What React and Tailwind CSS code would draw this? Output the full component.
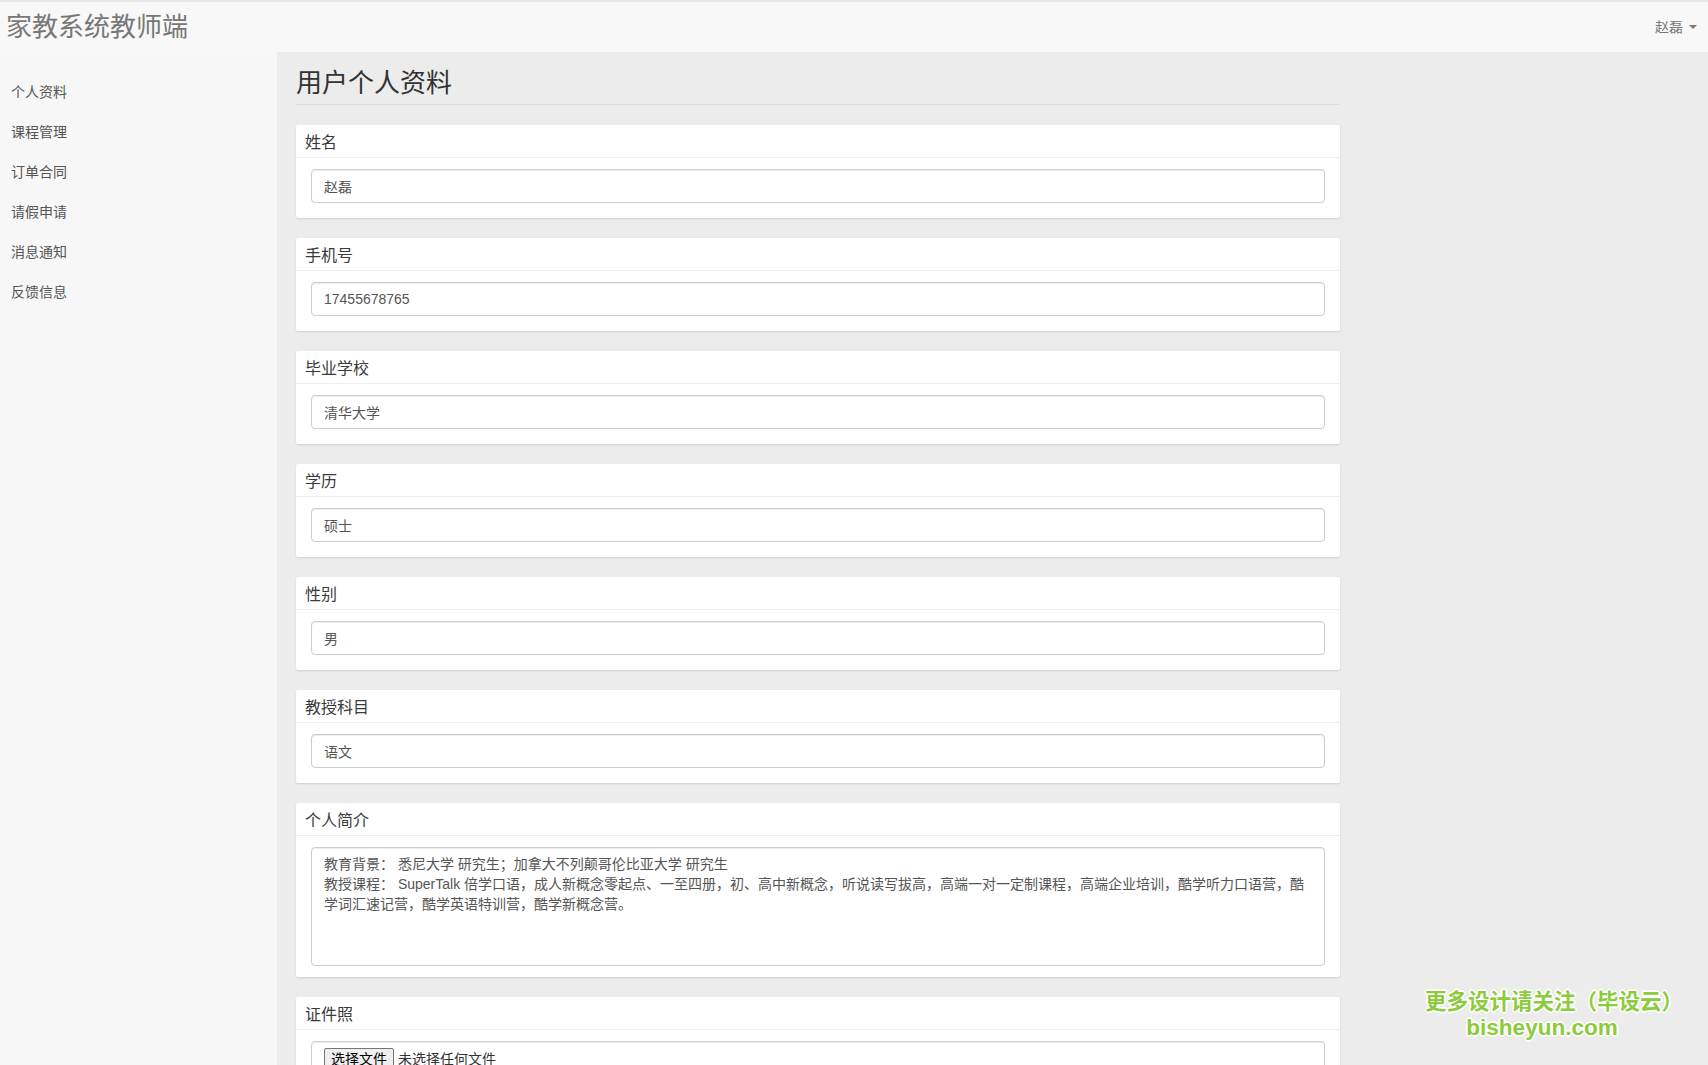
import React from 'react';

const menu = ['个人资料', '课程管理', '订单合同', '请假申请', '消息通知', '反馈信息'];

const fields = [
  { label: '姓名', value: '赵磊' },
  { label: '手机号', value: '17455678765' },
  { label: '毕业学校', value: '清华大学' },
  { label: '学历', value: '硕士' },
  { label: '性别', value: '男' },
  { label: '教授科目', value: '语文' },
];

const intro =
  '教育背景： 悉尼大学 研究生；加拿大不列颠哥伦比亚大学 研究生\n教授课程： SuperTalk 倍学口语，成人新概念零起点、一至四册，初、高中新概念，听说读写拔高，高端一对一定制课程，高端企业培训，酷学听力口语营，酷学词汇速记营，酷学英语特训营，酷学新概念营。';

const Panel = ({ title, bodyClass = 'pb-[15px]', children }) => (
  <div className="mb-[20px] rounded-[2px] bg-white shadow-[0_1px_2px_rgba(0,0,0,0.12)]">
    <div className="flex h-[33px] items-center border-b border-[#eeeeee] pl-[9px] pt-[3px] text-[16px] text-[#3a3a3a]">
      {title}
    </div>
    <div className={`px-[15px] pt-[11px] ${bodyClass}`}>{children}</div>
  </div>
);

const App = () => {
  return (
    <div className="relative min-h-screen bg-[#ececec] font-['Liberation_Sans','Noto_Sans_CJK_SC',sans-serif]">
      {/* Top navbar */}
      <header className="flex h-[52px] items-center justify-between border-t-2 border-[#e4e4e4] bg-[#f8f8f8]">
        <div className="pl-[6px] text-[26px] leading-[30px] text-[#777]">家教系统教师端</div>
        <div className="flex items-center gap-[6px] pr-[11px] text-[14px] text-[#777]">
          <span>赵磊</span>
          <span className="inline-block h-0 w-0 border-x-[4px] border-t-[4px] border-x-transparent border-t-[#777]" />
        </div>
      </header>

      <div className="flex">
        {/* Sidebar */}
        <aside className="w-[277px] shrink-0 bg-[#f7f7f7] pt-[20px]">
          {menu.map((item) => (
            <div key={item} className="flex h-[40px] items-center pl-[11px] text-[14px] text-[#555]">
              {item}
            </div>
          ))}
        </aside>

        {/* Main */}
        <main className="flex-1 pl-[19px] pt-[17px]">
          <div className="w-[1044px]">
            <h1 className="border-b border-[#dcdcdc] pb-[6px] text-[26px] leading-[29px] text-[#333]">
              用户个人资料
            </h1>
            <div className="mt-[20px]">
              {fields.map((f) => (
                <Panel key={f.label} title={f.label}>
                  <input
                    readOnly
                    value={f.value}
                    className="block h-[34px] w-full rounded-[4px] border border-[#ccc] bg-white px-[12px] text-[14px] text-[#555] shadow-[inset_0_1px_1px_rgba(0,0,0,0.075)] outline-none"
                  />
                </Panel>
              ))}

              <Panel title="个人简介" bodyClass="pb-[11px]">
                <textarea
                  readOnly
                  value={intro}
                  className="block h-[119px] w-full resize-none rounded-[4px] border border-[#ccc] bg-white px-[12px] py-[6px] text-[14px] leading-[20px] text-[#555] shadow-[inset_0_1px_1px_rgba(0,0,0,0.075)] outline-none"
                />
              </Panel>

              <Panel title="证件照">
                <div className="flex h-[34px] items-start rounded-[4px] border border-[#ccc] bg-white px-[12px] pt-[6px] text-[14px] shadow-[inset_0_1px_1px_rgba(0,0,0,0.075)]">
                  <span className="rounded-[2px] border border-[#767676] bg-[#efefef] px-[6px] leading-[20px] text-black">
                    选择文件
                  </span>
                  <span className="pl-[4px] leading-[22px] text-[#333]">未选择任何文件</span>
                </div>
              </Panel>
            </div>
          </div>
        </main>
      </div>

      {/* Watermark */}
      <div className="pointer-events-none absolute left-[1425px] top-[989px] flex flex-col items-center font-bold text-[#8ccb3c] [text-shadow:1px_0_0_#fff,-1px_0_0_#fff,0_1px_0_#fff,0_-1px_0_#fff,1px_1px_0_#fff,-1px_-1px_0_#fff,1px_-1px_0_#fff,-1px_1px_0_#fff,2px_0_0_#fff,-2px_0_0_#fff,0_2px_0_#fff,0_-2px_0_#fff,0_0_3px_#a6d86a]">
        <div className="text-[21.5px] leading-[26px]">更多设计请关注（毕设云）</div>
        <div className="mr-[24px] text-[22.5px] leading-[25px]">bisheyun.com</div>
      </div>
    </div>
  );
};

export default App;
